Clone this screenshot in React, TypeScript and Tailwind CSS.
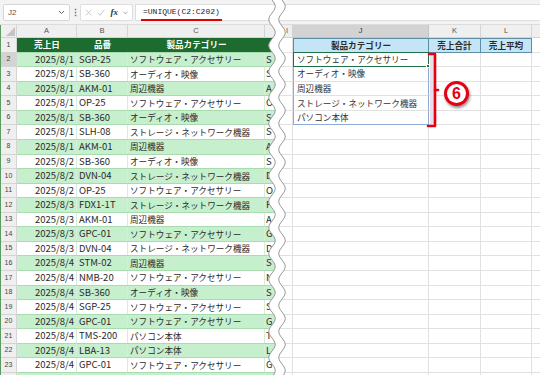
import React from "react";

const rows: [string, string, string][] = [
  ["2025/8/1", "SGP-25", "ソフトウェア・アクセサリー"],
  ["2025/8/1", "SB-360", "オーディオ・映像"],
  ["2025/8/1", "AKM-01", "周辺機器"],
  ["2025/8/1", "OP-25", "ソフトウェア・アクセサリー"],
  ["2025/8/1", "SB-360", "オーディオ・映像"],
  ["2025/8/1", "SLH-08", "ストレージ・ネットワーク機器"],
  ["2025/8/1", "AKM-01", "周辺機器"],
  ["2025/8/2", "SB-360", "オーディオ・映像"],
  ["2025/8/2", "DVN-04", "ストレージ・ネットワーク機器"],
  ["2025/8/2", "OP-25", "ソフトウェア・アクセサリー"],
  ["2025/8/3", "FDX1-1T", "ストレージ・ネットワーク機器"],
  ["2025/8/3", "AKM-01", "周辺機器"],
  ["2025/8/3", "GPC-01", "ソフトウェア・アクセサリー"],
  ["2025/8/3", "DVN-04", "ストレージ・ネットワーク機器"],
  ["2025/8/4", "STM-02", "周辺機器"],
  ["2025/8/4", "NMB-20", "ソフトウェア・アクセサリー"],
  ["2025/8/4", "SB-360", "オーディオ・映像"],
  ["2025/8/4", "SGP-25", "ソフトウェア・アクセサリー"],
  ["2025/8/4", "GPC-01", "ソフトウェア・アクセサリー"],
  ["2025/8/4", "TMS-200", "パソコン本体"],
  ["2025/8/4", "LBA-13", "パソコン本体"],
  ["2025/8/4", "GPC-01", "ソフトウェア・アクセサリー"],
  ["", "", ""],
];

const uniques = [
  "ソフトウェア・アクセサリー",
  "オーディオ・映像",
  "周辺機器",
  "ストレージ・ネットワーク機器",
  "パソコン本体",
];

function wavePath(): { fill: string; left: string; right: string } {
  const pts: [number, number][] = [];
  for (let y = -2; y <= 378; y += 1) {
    const cx = 15 + 3.2 * Math.sin((2 * Math.PI * y) / 26);
    pts.push([cx, y]);
  }
  const left = pts.map((p, i) => `${i === 0 ? "M" : "L"}${(p[0] - 5).toFixed(2)} ${p[1]}`).join(" ");
  const right = pts.map((p, i) => `${i === 0 ? "M" : "L"}${(p[0] + 5).toFixed(2)} ${p[1]}`).join(" ");
  const rev = [...pts].reverse().map((p) => `L${(p[0] + 5).toFixed(2)} ${p[1]}`).join(" ");
  const fill = left + " " + rev + " Z";
  return { fill, left, right };
}

export default function App() {
  const w = wavePath();
  return (
    <div className="relative w-[540px] h-[375px] overflow-hidden bg-white font-['Noto_Sans_CJK_JP',sans-serif] text-[#2a2a2a]">
      {/* Formula bar */}
      <div className="flex items-start h-[25px] bg-[#f3f3f3] pt-[4px] pl-[3px] border-b border-[#dcdcdc]">
        <div className="flex items-center justify-between w-[67px] h-[17px] bg-white border border-[#d6d6d6] rounded-[2px] px-[4px]">
          <span className="text-[8px] text-[#555] font-['Liberation_Sans',sans-serif]">J2</span>
          <svg width="7" height="5" viewBox="0 0 7 5"><path d="M1 1 L3.5 3.5 L6 1" stroke="#666" strokeWidth="1" fill="none" /></svg>
        </div>
        <div className="w-[10px] h-[17px] flex items-center justify-center text-[9px] text-[#666] font-bold">⋮</div>
        <div className="flex items-center w-[53px] h-[17px] bg-white border border-[#dedede] rounded-[2px] px-[4px] gap-[5px]">
          <svg width="9" height="9" viewBox="0 0 9 9"><path d="M1 1 L8 8 M8 1 L1 8" stroke="#b5b5b5" strokeWidth="0.9" /></svg>
          <svg width="10" height="9" viewBox="0 0 10 9"><path d="M1 5 L3.8 8 L9 1" stroke="#b5b5b5" strokeWidth="0.9" fill="none" /></svg>
          <span className="text-[9px] italic font-bold text-[#333] font-['Liberation_Serif',serif] leading-none">fx</span>
          <svg width="6" height="4" viewBox="0 0 6 4"><path d="M0.5 0.5 L3 3 L5.5 0.5" stroke="#888" strokeWidth="0.9" fill="none" /></svg>
        </div>
        <div className="flex-1 h-[17px] ml-[2px] bg-white border-y border-l border-[#dedede] flex items-center pl-[5px]">
          <span className="inline-block text-[8px] leading-[10px] font-['Liberation_Mono',monospace] text-[#222] border-b-[2px] border-[#e00000] pb-[2px] mt-[3px] px-[2px]">=UNIQUE(C2:C202)</span>
        </div>
      </div>

      <div className="flex">
        {/* Left sheet */}
        <div className="w-[276px] shrink-0 overflow-hidden border-l border-[#5b9c63]">
          <div className="flex h-[13px] bg-[#efefef] text-[7.5px] text-[#555] font-['Liberation_Sans',sans-serif]">
            <div className="relative w-[16px] shrink-0 border-r border-b border-[#d4d4d4]">
              <svg className="absolute right-[1px] bottom-[1px]" width="9" height="9" viewBox="0 0 9 9"><path d="M9 0 L9 9 L0 9 Z" fill="#c4c4c4" /></svg>
            </div>
            <div className="w-[60px] shrink-0 border-r border-b border-[#d4d4d4] flex items-center justify-center">A</div>
            <div className="w-[51px] shrink-0 border-r border-b border-[#d4d4d4] flex items-center justify-center">B</div>
            <div className="w-[137px] shrink-0 border-r border-b border-[#d4d4d4] flex items-center justify-center">C</div>
            <div className="w-[20px] shrink-0 border-b border-[#d4d4d4]"></div>
          </div>
          {/* Header row 1 */}
          <div className="flex h-[14.57px]">
            <div className="w-[16px] shrink-0 bg-[#efefef] border-r border-b border-[#d4d4d4] flex items-center justify-center text-[7px] text-[#444] font-['Liberation_Sans',sans-serif]">1</div>
            <div className="flex flex-1 bg-[#1d6b2e] text-white font-bold text-[8.6px] border-b border-[#a8dcaf]">
              <div className="w-[60px] shrink-0 flex items-center justify-center">売上日</div>
              <div className="w-[51px] shrink-0 flex items-center justify-center">品番</div>
              <div className="w-[137px] shrink-0 flex items-center justify-center">製品カテゴリー</div>
              <div className="flex-1"></div>
            </div>
          </div>
          {rows.map((r, i) => {
            const n = i + 2;
            const green = n % 2 === 0;
            return (
              <div key={n} className="flex h-[14.57px]">
                <div className={`w-[16px] shrink-0 border-r border-b border-[#d4d4d4] flex items-center justify-center text-[7px] text-[#444] font-['Liberation_Sans',sans-serif] ${n === 2 ? "bg-[#d3d3d3]" : "bg-[#efefef]"}`}>{n <= 23 ? n : ""}</div>
                <div className={`flex flex-1 border-b border-[#a8dcaf] ${green ? "bg-[#c6efce]" : "bg-white"}`}>
                  <div className="w-[60px] shrink-0 border-r border-[#d7ecd9] flex items-center justify-end pr-[2px] text-[9.5px] leading-none">{r[0]}</div>
                  <div className="w-[51px] shrink-0 border-r border-[#d7ecd9] flex items-center pl-[2px] text-[9.5px] leading-none">{r[1]}</div>
                  <div className="w-[137px] shrink-0 border-r border-[#d7ecd9] flex items-center pl-[2px] text-[8.6px] leading-none whitespace-nowrap">{r[2]}</div>
                  <div className="flex-1 flex items-center pl-[1px] text-[9.5px] leading-none">{r[1].charAt(0)}</div>
                </div>
              </div>
            );
          })}
        </div>

        {/* Right sheet */}
        <div className="relative flex-1 overflow-hidden">
          <div className="flex h-[13px] bg-[#efefef] text-[7.5px] text-[#555] font-['Liberation_Sans',sans-serif]">
            <div className="w-[17px] shrink-0 border-r border-b border-[#d4d4d4] flex items-center justify-end pr-[4px]">I</div>
            <div className="w-[136px] shrink-0 bg-[#d3d3d3] border-r border-b border-[#c4c4c4] flex items-center justify-center text-[#333]">J</div>
            <div className="w-[52px] shrink-0 border-r border-b border-[#d4d4d4] flex items-center justify-center">K</div>
            <div className="w-[51px] shrink-0 border-r border-b border-[#d4d4d4] flex items-center justify-center">L</div>
            <div className="flex-1 border-b border-[#d4d4d4]"></div>
          </div>
          <div className="flex h-[14.57px]">
            <div className="w-[17px] shrink-0 border-r border-b border-[#e1e1e1]"></div>
            <div className="w-[136px] shrink-0 bg-[#c4e5f5] border border-[#5f8fa8] flex items-center justify-center text-[8.6px] font-bold">製品カテゴリー</div>
            <div className="w-[52px] shrink-0 bg-[#c4e5f5] border-y border-r border-[#5f8fa8] flex items-center justify-center text-[8.6px] font-bold">売上合計</div>
            <div className="w-[51px] shrink-0 bg-[#c4e5f5] border-y border-r border-[#5f8fa8] flex items-center justify-center text-[8.6px] font-bold">売上平均</div>
            <div className="flex-1 border-b border-[#e1e1e1]"></div>
          </div>
          {Array.from({ length: 23 }).map((_, i) => {
            const txt = uniques[i];
            const spill = i < 5;
            return (
              <div key={i} className="flex h-[14.57px]">
                <div className="w-[17px] shrink-0 border-r border-b border-[#e1e1e1]"></div>
                <div className={`w-[136px] shrink-0 flex items-center pl-[3px] text-[8.6px] text-[#333] whitespace-nowrap ${spill ? "border-x border-[#8eaad6]" : "border-r"} ${i === 4 ? "border-b border-b-[#8eaad6]" : "border-b border-b-[#e1e1e1]"} ${spill ? "" : "border-r-[#e1e1e1]"}`}>{txt ?? ""}</div>
                <div className="w-[52px] shrink-0 border-r border-b border-[#e1e1e1]"></div>
                <div className="w-[51px] shrink-0 border-r border-b border-[#e1e1e1]"></div>
                <div className="flex-1 border-b border-[#e1e1e1]"></div>
              </div>
            );
          })}
          {/* Selection on J2 */}
          <div className="absolute left-[17px] top-[27px] w-[136px] h-[15px] border-[1.5px] border-[#1e7145]"></div>
          <div className="absolute left-[150px] top-[39px] w-[4px] h-[4px] bg-[#1e7145] border border-white"></div>
        </div>
      </div>

      {/* Torn wave separator */}
      <svg className="absolute left-[262px] top-0" width="30" height="375" viewBox="0 0 30 375">
        <path d={w.fill} fill="white" />
        <path d={w.left} stroke="#9a9a9a" strokeWidth="1" fill="none" />
        <path d={w.right} stroke="#9a9a9a" strokeWidth="1" fill="none" />
      </svg>

      {/* Red bracket */}
      <div className="absolute left-[430px] top-[54px] w-[4px] h-[72px] bg-[#e8dfe9]"></div>
      <svg className="absolute left-[424px] top-[50px]" width="18" height="80" viewBox="0 0 18 80">
        <path d="M5 4 H11 V76 H4" stroke="#e60012" strokeWidth="2.6" fill="none" strokeLinejoin="round" strokeLinecap="round" />
        <path d="M11 40 H14" stroke="#e60012" strokeWidth="2.6" strokeLinecap="round" />
      </svg>

      {/* Circled number */}
      <div className="absolute left-[444px] top-[81px] w-[25px] h-[25px] rounded-full bg-[#e60012] shadow-[1px_2px_3px_rgba(0,0,0,0.45)] flex items-center justify-center">
        <div className="w-[19px] h-[19px] rounded-full bg-white flex items-center justify-center">
          <span className="text-[16px] leading-none font-bold text-[#e60012] font-['Liberation_Sans',sans-serif]">6</span>
        </div>
      </div>
    </div>
  );
}
